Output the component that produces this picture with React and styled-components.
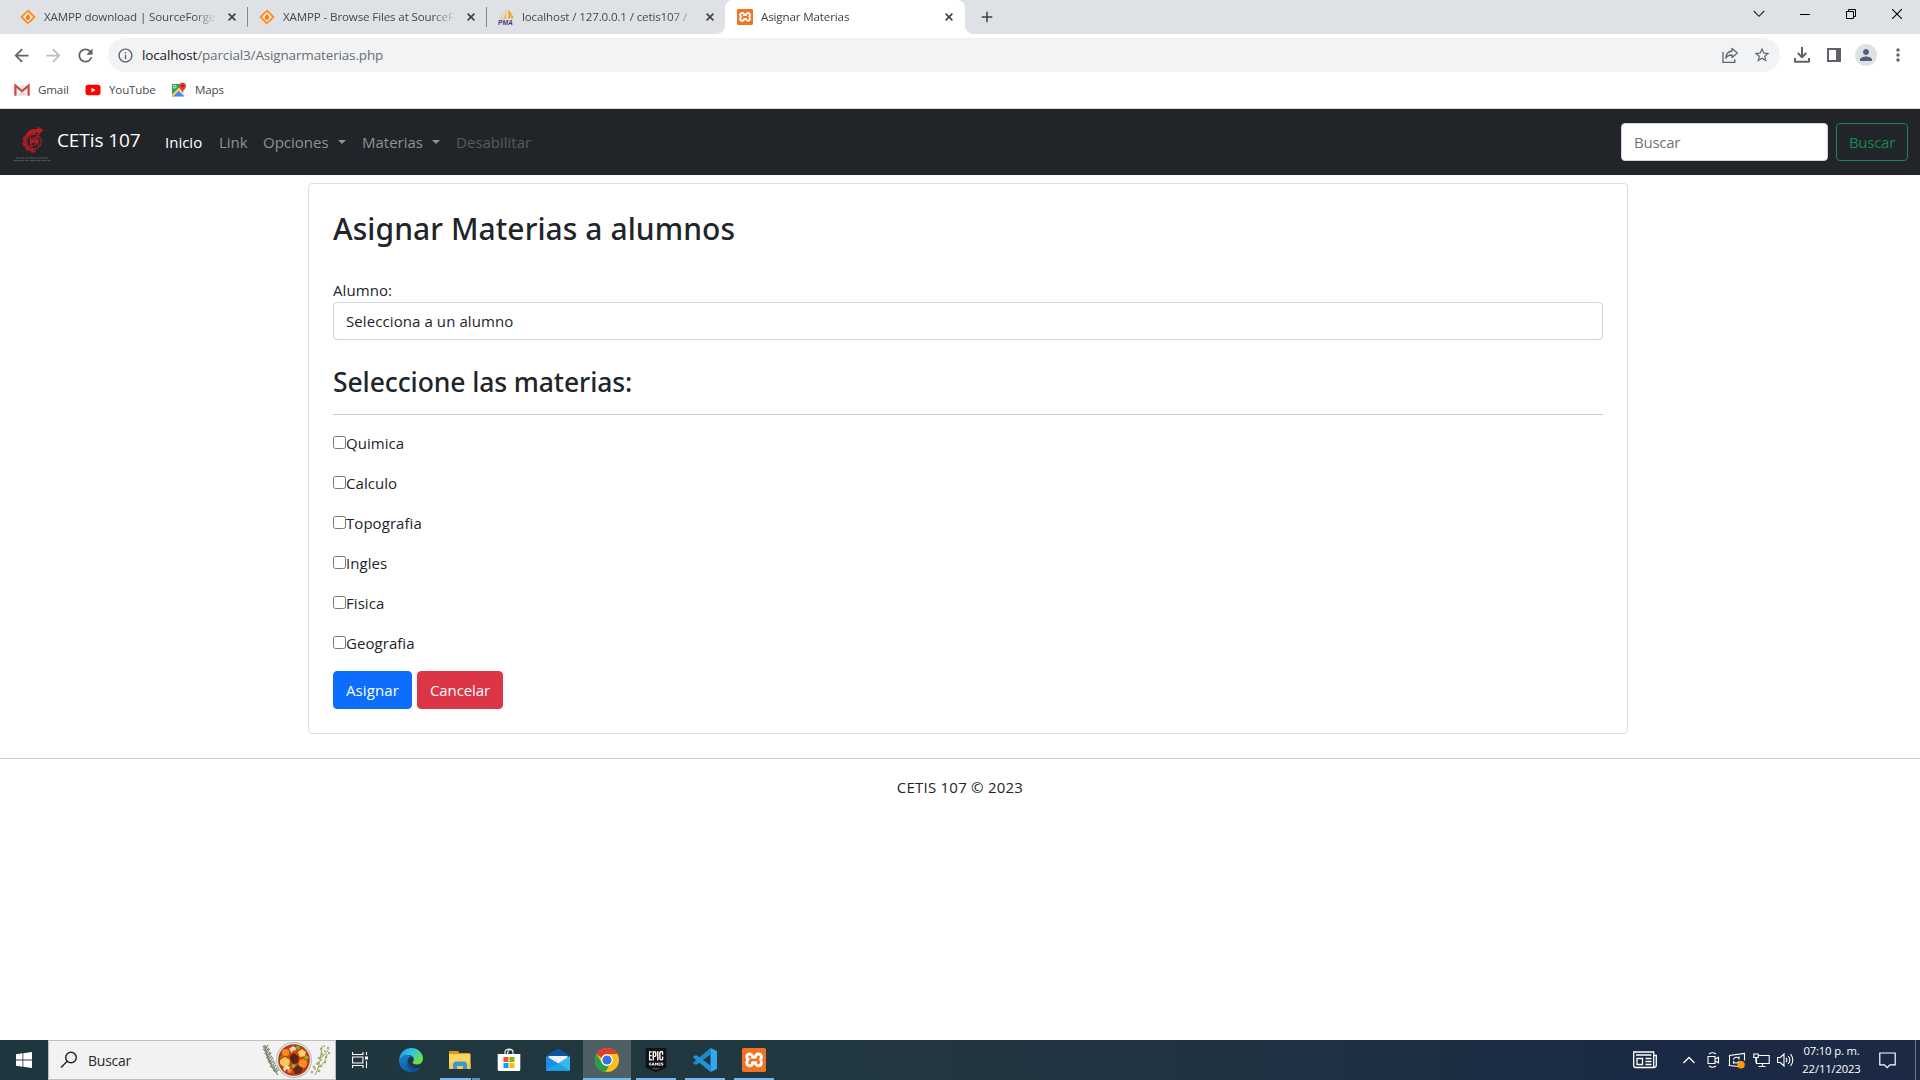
import React from "react";
import styled, { createGlobalStyle, css } from "styled-components";
import {
  MdArrowBack,
  MdArrowForward,
  MdRefresh,
  MdInfoOutline,
  MdStarBorder,
  MdMoreVert,
  MdAdd,
  MdPerson,
} from "react-icons/md";
import { SiXampp, SiEpicgames } from "react-icons/si";

const Global = createGlobalStyle`
  *, *::before, *::after { box-sizing: border-box; }
  html, body { margin: 0; padding: 0; background: #fff; overflow: hidden; }
  body, input, button { font-family: "Open Sans", "Noto Sans", sans-serif; }
  svg { display: block; flex: none; }
`;

const Screen = styled.div`
  display: flex;
  flex-direction: column;
  width: 1920px;
  height: 1080px;
  overflow: hidden;
  background: #fff;
  color: #212529;
  font-size: 15px;
`;

/* ---------- browser ---------- */

const TabStrip = styled.div`
  display: flex;
  height: 34px;
  flex: none;
  padding-left: 8px;
  background: #dee1e6;
`;

const TabBox = styled.div`
  position: relative;
  display: flex;
  align-items: center;
  width: 239px;
  height: 34px;
  padding: 0 10px 0 12px;
  font-size: 11.6px;
  color: #45494d;
  ${(p) =>
    p.$divider &&
    css`
      &::after {
        content: "";
        position: absolute;
        right: -1px;
        top: 7px;
        width: 1px;
        height: 20px;
        background: #85888d;
      }
    `}
  ${(p) =>
    p.$active &&
    css`
      width: 240px;
      background: #fff;
      color: #3c4043;
      border-radius: 8px 8px 0 0;
      &::before,
      &::after {
        content: "";
        position: absolute;
        bottom: 0;
        width: 8px;
        height: 8px;
      }
      &::before {
        left: -8px;
        background: radial-gradient(circle at 0 0, #dee1e6 7.5px, #fff 8px);
      }
      &::after {
        right: -8px;
        background: radial-gradient(circle at 100% 0, #dee1e6 7.5px, #fff 8px);
      }
    `}
`;

const TabTitle = styled.span`
  width: 172px;
  margin: 0 12px 0 8px;
  padding-bottom: 2px;
  overflow: hidden;
  white-space: nowrap;
  letter-spacing: -0.14px;
  -webkit-mask-image: linear-gradient(90deg, #000 150px, transparent 173px);
  mask-image: linear-gradient(90deg, #000 150px, transparent 173px);
`;

const NewTab = styled.div`
  display: flex;
  align-items: center;
  width: 44px;
  padding-left: 13px;
  color: #3c4043;
`;

const WindowControls = styled.div`
  display: flex;
  margin-left: auto;
  height: 28px;
`;

const ControlButton = styled.div`
  display: flex;
  align-items: center;
  justify-content: center;
  width: 46px;
`;

const Toolbar = styled.div`
  display: flex;
  align-items: center;
  height: 42px;
  flex: none;
  padding: 0 4px 0 5px;
  color: #5f6368;
`;

const ToolButton = styled.div`
  display: flex;
  align-items: center;
  justify-content: center;
  width: 32px;
  height: 34px;
  color: ${(p) => (p.$muted ? "#bcbec1" : "#5f6368")};
`;

const Omnibox = styled.div`
  display: flex;
  align-items: center;
  width: 1672px;
  height: 34px;
  margin: 0 6px 0 7px;
  padding: 0 2px 0 9px;
  border-radius: 17px;
  background: #f1f3f4;
`;

const Url = styled.span`
  flex: 1;
  margin-left: 8px;
  font-size: 13.5px;
  letter-spacing: -0.15px;
  color: #6a6e73;
  b { font-weight: 400; color: #202124; }
`;

const Avatar = styled.div`
  display: flex;
  align-items: center;
  justify-content: center;
  width: 22px;
  height: 22px;
  border-radius: 50%;
  background: #dee1e6;
  color: #55607a;
`;

const Bookmarks = styled.div`
  display: flex;
  align-items: center;
  height: 33px;
  flex: none;
  padding: 0 0 4px 14px;
  border-bottom: 1px solid #d5d8dc;
  color: #45494d;
  font-size: 11.6px;
  letter-spacing: -0.15px;
`;

const Bookmark = styled.div`
  display: flex;
  align-items: center;
  gap: 8px;
  width: ${(p) => p.$w}px;
  span { padding-bottom: 2px; }
`;

/* ---------- page ---------- */

const Navbar = styled.nav`
  display: flex;
  align-items: center;
  height: 66px;
  flex: none;
  padding: 0 12px;
  background: #212529;
`;

const Brand = styled.a`
  display: flex;
  align-items: center;
  gap: 5px;
  width: 153px;
  padding-bottom: 4px;
  color: #fff;
  font-size: 19px;
  letter-spacing: -0.1px;
  svg { margin-top: 6px; }
`;

const NavLink = styled.a`
  display: flex;
  align-items: center;
  width: ${(p) => p.$w}px;
  color: ${(p) => p.$color || "#909294"};
`;

const Caret = styled.span`
  margin: 0 0 1px 9px;
  border: 4.2px solid transparent;
  border-top-color: currentColor;
  border-bottom: 0;
`;

const SearchForm = styled.form`
  display: flex;
  gap: 8px;
  margin-left: auto;
`;

const SearchInput = styled.input`
  width: 207px;
  height: 38px;
  padding: 0 12px;
  border: 1px solid #ced4da;
  border-radius: 4px;
  font-size: 15px;
  letter-spacing: -0.25px;
  &::placeholder { color: #6c757d; opacity: 1; }
`;

const Button = styled.button`
  width: ${(p) => p.$w}px;
  height: 38px;
  padding: 0;
  border: 1px solid ${(p) => p.$border || p.$bg};
  border-radius: 4px;
  background: ${(p) => p.$bg || "transparent"};
  color: ${(p) => p.$color || "#fff"};
  font-size: 15px;
  letter-spacing: ${(p) => p.$spacing || 0}px;
`;

const Card = styled.main`
  flex: none;
  width: 1320px;
  height: 551px;
  margin: 8px 0 0 308px;
  padding: 24px;
  border: 1px solid #dfdfdf;
  border-radius: 4px;
`;

const Title = styled.h1`
  margin: 0 0 28px;
  font: 500 30px/42px "Noto Sans", sans-serif;
  letter-spacing: 0.07px;
`;

const Label = styled.label`
  display: block;
  line-height: 24px;
  letter-spacing: 0.07px;
`;

const SelectBox = styled.div`
  height: 38px;
  padding: 0 12px;
  border: 1px solid #ced4da;
  border-radius: 4px;
  line-height: 36px;
  letter-spacing: 0.09px;
`;

const Subtitle = styled.h3`
  margin: 24px 0 14px;
  font: 500 26.5px/36px "Noto Sans", sans-serif;
  letter-spacing: -0.1px;
`;

const Rule = styled.hr`
  flex: none;
  width: 100%;
  height: 1px;
  margin: ${(p) => p.$top || 0}px 0 16px;
  border: 0;
  background: #c7c8c9;
`;

const CheckRow = styled.label`
  display: flex;
  align-items: flex-start;
  height: 24px;
  margin-bottom: 16px;
  line-height: 24px;
  letter-spacing: 0.05px;
  input { width: 13px; height: 13px; margin: 5px 0 0; }
`;

const Actions = styled.div`
  display: flex;
  gap: 5px;
`;

const Footer = styled.footer`
  flex: 1;
  line-height: 24px;
  text-align: center;
  letter-spacing: 0.23px;
`;

/* ---------- taskbar ---------- */

const Taskbar = styled.div`
  display: flex;
  height: 40px;
  flex: none;
  background: linear-gradient(90deg, #20363f 0%, #223840 42%, #1f3242 65%, #1b2a44 85%, #1b2944 100%);
  color: #fff;
`;

const StartButton = styled.div`
  display: flex;
  align-items: center;
  justify-content: center;
  width: 48px;
`;

const TaskSearch = styled.div`
  display: flex;
  align-items: center;
  width: 288px;
  padding: 0 3px 0 11px;
  border: 1px solid #bdbdbd;
  background: #f2f2f2;
  color: #2b2b2b;
  font-size: 14px;
  letter-spacing: -0.25px;
  span { flex: 1; margin-left: 10px; padding-top: 1px; }
`;

const Apps = styled.div`
  display: flex;
  gap: 1px;
  margin-left: 3px;
`;

const AppButton = styled.div`
  display: flex;
  flex-direction: column;
  align-items: center;
  justify-content: space-between;
  width: 48px;
  height: 40px;
  padding-top: 8px;
  background: ${(p) => (p.$active ? "#4e5f66" : "transparent")};
`;

const Indicator = styled.div`
  width: ${(p) => (p.$wide ? 48 : 40)}px;
  height: 2px;
  background: ${(p) =>
    p.$stacked ? "linear-gradient(90deg, #76b9ed 31px, #20363f 31px 32px, #5c8fb4 32px)" : "#76b9ed"};
`;

const XamppTile = styled.div`
  display: flex;
  align-items: center;
  justify-content: center;
  width: ${(p) => p.$s}px;
  height: ${(p) => p.$s}px;
  flex: none;
  border-radius: 2px;
  background: radial-gradient(#fff 60%, #fb7a24 61%);
  color: #f27222;
`;

const EpicTile = styled.div`
  display: flex;
  width: 24px;
  height: 24px;
  color: #111;
  background: linear-gradient(#fff, #fff) center / 15px 18px no-repeat;
`;

const Tray = styled.div`
  display: flex;
  align-items: center;
  margin-left: auto;
`;

const TrayItem = styled.div`
  display: flex;
  justify-content: center;
  width: ${(p) => p.$w || 24}px;
`;

const Clock = styled.div`
  width: 70px;
  padding: 0 1px 1px 0;
  font-size: 11.3px;
  line-height: 17.5px;
  letter-spacing: -0.16px;
  text-align: center;
  white-space: nowrap;
`;

const ShowDesktop = styled.div`
  width: 5px;
  height: 40px;
  margin-left: 8px;
  border-left: 1px solid #69748a;
`;

/* ---------- drawings ---------- */

const CloseIcon = () => (
  <svg width="8" height="8" viewBox="0 0 8 8" stroke="#3c4043" strokeWidth="1.600">
    <path d="m.6.6 6.800 6.800M7.400.6.6 7.400" />
  </svg>
);

const SourceForge = () => (
  <svg width="16" height="16" viewBox="0 0 16 16">
    <path d="M8 .3 15.700 8 8 15.700.3 8z" fill="#ff8a24" />
    <path d="M8 3 13 8 8 13 3 8z" fill="#fff3e4" />
    <path d="M8.100 4.200c.2 1.500 2 2.400 2 4.300 0 1.400-1 2.400-2.200 2.400-1.300 0-2.200-1-2.200-2.200 0-1.800 2-2.600 2.400-4.500z" fill="#ff7a10" />
    <path d="m5.800 2.500 1.800-1.800M10.200 13.500l-1.800 1.800" stroke="#fff" strokeWidth=".8" />
  </svg>
);

const PmaText = styled.text`
  font: italic 700 6.6px "Liberation Sans", sans-serif;
  fill: #3d3a72;
`;

const PhpMyAdmin = () => (
  <svg width="16" height="16" viewBox="0 0 16 16">
    <path d="M4.400 1.500C4.600 5 3.600 8 1 10.200l2.600-.3C5 7.500 5.200 4 4.400 1.500z" fill="#f8c98c" />
    <path d="M7.300.5C8 4 7 7.500 5 9.900l3.200-.3C8.800 6 8.600 3 7.300.5z" fill="#fbb04c" />
    <path d="M9.800.5c1 3 1 6.300 0 9l2 .1c.8-1.600.9-3.600.6-5.500.9 1.800 1 3.700.7 5.500l2.300.2C15 6 12.500 2.600 9.800.5z" fill="#f89c0e" />
    <PmaText x="0" y="15.600">PMA</PmaText>
  </svg>
);

const GmailIcon = () => (
  <svg width="16" height="16" viewBox="0 0 16 16">
    <path d="M1 3h14v10.500H1z" fill="#f0eeee" />
    <path d="M3 13.500 8 9l5 4.500z" fill="#dcdcdc" />
    <path d="M1.400 13.800V3.600L8 9l6.600-5.400v10.200" fill="none" stroke="#d5463a" strokeWidth="2.200" />
  </svg>
);

const YouTubeIcon = () => (
  <svg width="16" height="16" viewBox="0 0 16 16">
    <rect x=".5" y="2.700" width="15" height="10.600" rx="2.800" fill="#f00" />
    <path d="M6.500 5.700v4.800L10.600 8.100z" fill="#fff" />
  </svg>
);

const MapsIcon = () => (
  <svg width="16" height="16" viewBox="0 0 16 16">
    <rect x="1" y="2" width="12.500" height="12.500" rx="1" fill="#e9e9e9" />
    <path d="M1 2h8v5L1 14z" fill="#2aa25a" />
    <path d="m1 14.500 6.300-6.200 6.200 6.200z" fill="#4a86f0" />
    <path d="m1 12.500 9-9 1.500 1.500-9.500 9.500z" fill="#ffd04a" />
    <path d="M11.500.6c2 0 3.500 1.500 3.500 3.400 0 2.400-2.700 3.700-3.500 7-.8-3.300-3.500-4.600-3.500-7C8 2.100 9.500.6 11.500.6z" fill="#e23f33" />
    <circle cx="11.500" cy="4" r="1.200" fill="#8c1d17" />
    <circle cx="3.700" cy="4.700" r="1.400" fill="none" stroke="#fff" strokeWidth=".8" />
  </svg>
);

const ShareIcon = () => (
  <svg width="18" height="18" viewBox="0 0 18 18" fill="none" stroke="#5f6368" strokeWidth="1.300">
    <path d="M2 6v10.300h11.800v-3" />
    <path d="M11 2.400 16.400 7 11 11.500V9c-3 0-5 .9-6.200 3.200C5 8.300 7.300 5.500 11 5z" strokeLinejoin="round" />
  </svg>
);

const DownloadIcon = () => (
  <svg width="18" height="18" viewBox="0 0 18 18" fill="none" stroke="#5f6368" strokeWidth="2">
    <path d="M9 1v10M4.800 7 9 11.200 13.200 7M2 12v3.800h14V12" strokeLinejoin="round" />
  </svg>
);

const PanelIcon = () => (
  <svg width="14" height="14" viewBox="0 0 14 14">
    <path d="M1 1h12v12H1z" fill="none" stroke="#5f6368" strokeWidth="2" />
    <path d="M9 0h5v14H9z" fill="#5f6368" />
  </svg>
);

const teeth = [95, 130, 165, 200, 235, 268];

const SchoolLogo = () => (
  <svg width="40" height="40" viewBox="0 0 40 40">
    {teeth.map((a) => (
      <path key={a} d="M29 16.600h3.600v3.800H29z" fill="#a81c1f" transform={`rotate(${a} 21.500 18.500)`} />
    ))}
    <path d="M21.500 9.500a9 9 0 1 0 2 17.800" fill="none" stroke="#a81c1f" strokeWidth="2.600" />
    <path d="M14.500 12.500c.5-3.500 2.500-5.700 5.500-6.200L25.500 6V3.200L31.500 7 26 12.200V9.500c-4 0-7 1-9.500 4.500z" fill="#b51d20" />
    <circle cx="22" cy="18.500" r="7.300" fill="#212529" stroke="#a81c1f" strokeWidth="1.200" />
    <path d="M18.700 14v3.200h2.600V14M23.200 14v3.200H26V14h-2.800M21.300 19.600h-2.600V23h2.600M23.200 23v-3.400H26V23M17.500 18.400h9" fill="none" stroke="#b51d20" strokeWidth="1.300" />
    <path d="M4 35h32" stroke="#595d60" strokeWidth="1.200" strokeDasharray="3 .6 5 .8" />
    <path d="M1.500 37.600h37" stroke="#4f5356" strokeWidth="1" strokeDasharray="4 .6 6 .8" />
  </svg>
);

const WindowsLogo = () => (
  <svg width="16" height="16" viewBox="0 0 16 16" fill="#fff">
    <path d="M0 2.200 6.500 1.300v6.300H0zM7.300 1.200 16 0v7.600H7.300zM0 8.400h6.500v6.300L0 13.800zM7.300 8.400H16V16l-8.700-1.200z" />
  </svg>
);

const SearchIcon = () => (
  <svg width="18" height="18" viewBox="0 0 18 18" fill="none" stroke="#222" strokeWidth="1.400">
    <circle cx="11" cy="6.500" r="5.300" />
    <path d="M7.200 10.300 1 16.500" />
  </svg>
);

const rosemary = [[3, 7], [4.5, 11], [6, 15], [8, 19.5], [10, 24], [13, 28]];
const thyme = [[66, 7], [67, 12], [64, 16], [63, 21], [59, 25], [57, 30]];

const StewDrawing = () => (
  <svg width="70" height="38" viewBox="0 0 70 38">
    <path d="M3 4C4 16 9 26 16 34" fill="none" stroke="#75705c" strokeWidth="1.100" />
    {rosemary.map(([x, y]) => (
      <path key={y} d={`M${x - 2} ${y - 2}l2.500 3 2.500-4M${x - 2} ${y + 1}l3 2 3-3`} fill="none" stroke="#7d8a72" strokeWidth="1.200" />
    ))}
    <circle cx="32" cy="19" r="18" fill="#b9bec4" />
    <circle cx="32" cy="19" r="17" fill="#e5e8eb" />
    <circle cx="32" cy="19" r="15.800" fill="#b8380f" />
    <circle cx="32" cy="19" r="13.500" fill="#cf4a12" />
    <circle cx="23.500" cy="11.500" r="3.600" fill="#f98b1e" />
    <circle cx="41" cy="22.500" r="4.200" fill="#fb8c22" />
    <circle cx="27.500" cy="30" r="2" fill="#f3831c" />
    <path d="m18 19 5-3 5 3-1 5-5 2-4-3z" fill="#fcc95c" />
    <path d="m36 11 4-3 4 3-1 4-5 1z" fill="#fcd06a" />
    <path d="m28 15 4-3 5 4-1 6-5 1-3-4z" fill="#5a2416" />
    <path d="m31 28 4-4 6 3-2 5-6 1z" fill="#64281a" />
    <path d="m27 8 4-3 3 2-1 3-2-1-1 3zM21 28l3-4 4 2-1 3-3-1-1 3z" fill="#efdccb" />
    <circle cx="36" cy="6.500" r="2" fill="#6fb52c" />
    <circle cx="44.500" cy="16.500" r="2" fill="#7cbb30" />
    <circle cx="31.500" cy="25" r="1.900" fill="#79b82f" />
    <circle cx="19.500" cy="16" r="1.300" fill="#5c9a22" />
    <path d="M53 34C57 27 59 17 60 5M56 26c5-2 8-6 9-13M58 17c4-2 6-5 8-8" fill="none" stroke="#8b9460" strokeWidth=".9" />
    {thyme.map(([x, y]) => (
      <g key={y} fill="#a3b364">
        <circle cx={x} cy={y} r="1.300" />
        <circle cx={x - 7} cy={y + 1} r="1.300" />
        <circle cx={x - 4} cy={y - 2} r="1" />
      </g>
    ))}
  </svg>
);

const TaskView = () => (
  <svg width="16" height="16" viewBox="0 0 16 16" fill="none" stroke="#fff" strokeWidth="1.100">
    <path d="M.5 0v2.500h10.500V0M.5 16v-2.500h10.500V16M.6 5h10.300v6H.6zM14.500 0v3M14.500 9v7" />
    <path d="M13 4.500h3v3h-3z" fill="#fff" stroke="none" />
  </svg>
);

const EdgeIcon = () => (
  <svg width="24" height="24" viewBox="0 0 24 24">
    <defs>
      <linearGradient id="edgeTop" x1="0" y1="0" x2="1" y2=".5">
        <stop offset="0" stopColor="#1b8fdd" />
        <stop offset=".5" stopColor="#2fc2e4" />
        <stop offset="1" stopColor="#6fe04a" />
      </linearGradient>
      <linearGradient id="edgeLow" x1="0" y1="0" x2="1" y2="1">
        <stop offset="0" stopColor="#1683d8" />
        <stop offset="1" stopColor="#114a8b" />
      </linearGradient>
    </defs>
    <path d="M.3 11C1 4.500 6 0 12.200 0 19 0 24 5 24 10.500c0 3.800-2.700 6-6 6-2.600 0-4.300-1-4.300-2 0-.8 1.100-1.300 1.100-3C14.800 9 12.500 7 9.200 7 5 7 1.500 9 .3 13z" fill="url(#edgeTop)" />
    <path d="M.2 12.500C1 9 5 7 9 7c2 0 3.400.7 4.300 1.800C10 8.500 8.800 11 8.800 13.300c0 3.800 3.500 7 8.200 7 2 0 3.600-.6 5.300-1.600C20.200 22 16.500 24 12.300 24 5.500 24-.2 19 .2 12.500z" fill="url(#edgeLow)" />
    <path d="M9.200 12c-.7 1-.5 2-.4 3 .7 3.200 4 5.300 8.200 5.300 2 0 3.600-.6 5.300-1.600-2 3.200-5 4.800-8.300 5C9 22.500 6.500 16 9.200 12z" fill="#0d4f96" />
  </svg>
);

const ExplorerIcon = () => (
  <svg width="24" height="24" viewBox="0 0 24 24">
    <path d="M1 3h9l1.500 2H22v4H1z" fill="#dc9a10" />
    <path d="M1 6h21.500v15H1z" fill="#fcd462" />
    <path d="M1 15h21.500v6H1z" fill="#f8c84e" />
    <path d="M5 21v-5.500L7 13.500h10l2 2V21h-4v-3H9v3z" fill="#3d94d6" />
  </svg>
);

const StoreIcon = () => (
  <svg width="24" height="24" viewBox="0 0 24 24">
    <path d="M8 6.500V4c0-4 8-4 8 0v2.500M10.800 6V3.500c.5-2.500 5-2.500 5 0" fill="none" stroke="#f4f4f4" strokeWidth="1.200" />
    <path d="M.7 6h22.600v15.500q0 1.500-1.500 1.500H2.200q-1.500 0-1.500-1.500z" fill="#fff" />
    <path d="M6.500 9h5v5h-5z" fill="#f25022" />
    <path d="M12.500 9h5v5h-5z" fill="#7fba00" />
    <path d="M6.500 15h5v5h-5z" fill="#00a4ef" />
    <path d="M12.500 15h5v5h-5z" fill="#ffb900" />
  </svg>
);

const MailIcon = () => (
  <svg width="24" height="24" viewBox="0 0 24 24">
    <path d="M0 8 12 .5 24 8v3H0z" fill="#0b57a4" />
    <path d="M2.500 8h19v8h-19z" fill="#f2f2f2" />
    <path d="M0 8v14.500h24z" fill="#1a8fe3" />
    <path d="M24 8v14.500H0z" fill="#35b8f1" />
    <path d="M0 22.500 12 15l12 7.500z" fill="#1fa2ea" />
  </svg>
);

const ChromeIcon = () => (
  <svg width="24" height="24" viewBox="0 0 24 24">
    <circle cx="12" cy="12" r="12" fill="#fbc116" />
    <path d="M1.600 6A12 12 0 0 1 22.400 6H12a6 6 0 0 0-5.600 4z" fill="#e33b2e" />
    <path d="M1.600 6 6.800 15A6 6 0 0 0 14 17.700L10.500 24A12 12 0 0 1 1.600 6z" fill="#269f4b" />
    <circle cx="12" cy="12" r="5.800" fill="#fff" />
    <circle cx="12" cy="12" r="4.600" fill="#2f76ea" />
  </svg>
);

const CodeIcon = () => (
  <svg width="24" height="24" viewBox="0 0 24 24">
    <path d="M17.500 0v6.500L3.200 17 .5 15.600q-.6-.6 0-1.300z" fill="#1f86ca" />
    <path d="M17.500 24v-6.500L3.200 7 .5 8.400q-.6.6 0 1.300z" fill="#2193dc" />
    <path d="M17.500 0 24 3v18l-6.500 3z" fill="#2fa8f2" />
  </svg>
);

const NewsIcon = () => (
  <svg width="24" height="18" viewBox="0 0 24 18" fill="none" stroke="#fff" strokeWidth="1.300">
    <path d="M.7 1h20v15.500H2.500Q.7 16.500.7 14.500zM21 4.500h2.300V14q0 2.500-2.500 2.500M3 4h15.500M12.500 7.500h6M12.500 10.500h6M12.500 13.500h6M4 7.500h5.500v6H4z" />
  </svg>
);

const ChevronUp = () => (
  <svg width="12" height="8" viewBox="0 0 12 8" fill="none" stroke="#fff" strokeWidth="1.300">
    <path d="M.5 7 6 1.500 11.500 7" />
  </svg>
);

const MeetIcon = () => (
  <svg width="14" height="16" viewBox="0 0 14 16" fill="none" stroke="#fff" strokeWidth="1.100">
    <path d="M2 4.500h7v7H2zM9 7l3.500-1.700v5.500L9 9M3 2Q6.500-.5 10 2M3 14q3.500 2.500 7 0" />
  </svg>
);

const UpdateIcon = () => (
  <svg width="18" height="17" viewBox="0 0 18 17" fill="none" stroke="#fff" strokeWidth="1.100">
    <path d="M10.500 14.500 1.500 13.500v-10L16.500 1.500v7M1.500 13.500H.5" />
    <path d="M5.500 7.500c.7-2.500 4-3 5.500-1V4.500M11 9c-1 2.500-4 2.500-5.500.8v2" />
    <circle cx="13" cy="12.800" r="3.800" fill="#ff9a0a" stroke="none" />
  </svg>
);

const NetworkIcon = () => (
  <svg width="17" height="16" viewBox="0 0 17 16" fill="none" stroke="#fff" strokeWidth="1.100">
    <path d="M5.500 3.500h10.700v8H3.500V6M9.500 11.500v3M5.500 14.500h7M.8 2h4.400v3.500H.8zM2.900 5.500v5" />
  </svg>
);

const SpeakerIcon = () => (
  <svg width="17" height="16" viewBox="0 0 17 16" fill="none" stroke="#fff" strokeWidth="1.100">
    <path d="M.6 5.500h2.700L7 2v12l-3.700-3.500H.6zM9 5.800q1.700 2.200 0 4.400M11.300 4q3 4 0 8M13.600 2q4.400 6 0 12" />
  </svg>
);

const NoticeIcon = () => (
  <svg width="17" height="17" viewBox="0 0 17 17" fill="none" stroke="#fff" strokeWidth="1.200">
    <path d="M.8 1h15.400v11.800h-5.200l-2.800 2.800-2.800-2.800H.8z" />
  </svg>
);

const XamppIcon = ({ size }) => (
  <XamppTile $s={size}>
    <SiXampp size={size} />
  </XamppTile>
);

/* ---------- composition ---------- */

const tabs = [
  { title: "XAMPP download | SourceForge", icon: <SourceForge />, divider: true },
  { title: "XAMPP - Browse Files at SourceForge", icon: <SourceForge />, divider: true },
  { title: "localhost / 127.0.0.1 / cetis107 /", icon: <PhpMyAdmin /> },
  { title: "Asignar Materias", icon: <XamppIcon size={16} />, active: true },
];

const subjects = ["Quimica", "Calculo", "Topografia", "Ingles", "Fisica", "Geografia"];

const apps = [
  { icon: <EdgeIcon /> },
  { icon: <ExplorerIcon />, open: true, stacked: true },
  { icon: <StoreIcon /> },
  { icon: <MailIcon /> },
  { icon: <ChromeIcon />, open: true, active: true },
  { icon: <EpicTile><SiEpicgames size={24} /></EpicTile>, open: true },
  { icon: <CodeIcon />, open: true },
  { icon: <XamppIcon size={24} />, open: true },
];

function Browser() {
  return (
    <>
      <TabStrip>
        {tabs.map((t) => (
          <TabBox key={t.title} $active={t.active} $divider={t.divider}>
            {t.icon}
            <TabTitle>{t.title}</TabTitle>
            <CloseIcon />
          </TabBox>
        ))}
        <NewTab>
          <MdAdd size={18} />
        </NewTab>
        <WindowControls>
          <ControlButton>
            <svg width="12" height="8" viewBox="0 0 12 8" fill="none" stroke="#222" strokeWidth="1.100">
              <path d="M.8 1 6 6.300 11.200 1" />
            </svg>
          </ControlButton>
          <ControlButton>
            <svg width="10" height="1">
              <path d="M0 .5h10" stroke="#000" />
            </svg>
          </ControlButton>
          <ControlButton>
            <svg width="10" height="10" viewBox="0 0 10 10" fill="none" stroke="#000">
              <path d="M.5 2.500h7v7h-7zM2.500 2.500v-2h7v7h-2" />
            </svg>
          </ControlButton>
          <ControlButton>
            <svg width="10" height="10" viewBox="0 0 10 10" stroke="#000" strokeWidth="1.100">
              <path d="m0 0 10 10M10 0 0 10" />
            </svg>
          </ControlButton>
        </WindowControls>
      </TabStrip>
      <Toolbar>
        <ToolButton><MdArrowBack size={21} /></ToolButton>
        <ToolButton $muted><MdArrowForward size={21} /></ToolButton>
        <ToolButton><MdRefresh size={21} /></ToolButton>
        <Omnibox>
          <MdInfoOutline size={17} />
          <Url><b>localhost</b>/parcial3/Asignarmaterias.php</Url>
          <ToolButton><ShareIcon /></ToolButton>
          <ToolButton><MdStarBorder size={18} /></ToolButton>
        </Omnibox>
        <ToolButton><DownloadIcon /></ToolButton>
        <ToolButton><PanelIcon /></ToolButton>
        <ToolButton><Avatar><MdPerson size={18} /></Avatar></ToolButton>
        <ToolButton><MdMoreVert size={20} /></ToolButton>
      </Toolbar>
      <Bookmarks>
        <Bookmark $w={71}><GmailIcon /><span>Gmail</span></Bookmark>
        <Bookmark $w={86}><YouTubeIcon /><span>YouTube</span></Bookmark>
        <Bookmark $w={70}><MapsIcon /><span>Maps</span></Bookmark>
      </Bookmarks>
    </>
  );
}

function Page() {
  return (
    <>
      <Navbar>
        <Brand><SchoolLogo />CETis 107</Brand>
        <NavLink $w={54} $color="#fff">Inicio</NavLink>
        <NavLink $w={44}>Link</NavLink>
        <NavLink $w={99}>Opciones<Caret /></NavLink>
        <NavLink $w={94}>Materias<Caret /></NavLink>
        <NavLink $w={80} $color="#585b5e">Desabilitar</NavLink>
        <SearchForm>
          <SearchInput placeholder="Buscar" />
          <Button type="button" $w={72} $border="#198754" $color="#198754" $spacing={-0.25}>Buscar</Button>
        </SearchForm>
      </Navbar>
      <Card>
        <Title>Asignar Materias a alumnos</Title>
        <Label>Alumno:</Label>
        <SelectBox>Selecciona a un alumno</SelectBox>
        <Subtitle>Seleccione las materias:</Subtitle>
        <Rule />
        {subjects.map((s) => (
          <CheckRow key={s}><input type="checkbox" />{s}</CheckRow>
        ))}
        <Actions>
          <Button $w={79} $bg="#0d6efd" $spacing={0.1}>Asignar</Button>
          <Button $w={86} $bg="#dc3545" $spacing={-0.1}>Cancelar</Button>
        </Actions>
      </Card>
      <Rule $top={24} />
      <Footer>CETIS 107 © 2023</Footer>
    </>
  );
}

function SystemBar() {
  return (
    <Taskbar>
      <StartButton><WindowsLogo /></StartButton>
      <TaskSearch><SearchIcon /><span>Buscar</span><StewDrawing /></TaskSearch>
      <StartButton><TaskView /></StartButton>
      <Apps>
        {apps.map((a, i) => (
          <AppButton key={i} $active={a.active}>
            {a.icon}
            {a.open && <Indicator $wide={a.active} $stacked={a.stacked} />}
          </AppButton>
        ))}
      </Apps>
      <Tray>
        <TrayItem $w={64}><NewsIcon /></TrayItem>
        <TrayItem $w={24}><ChevronUp /></TrayItem>
        <TrayItem><MeetIcon /></TrayItem>
        <TrayItem><UpdateIcon /></TrayItem>
        <TrayItem><NetworkIcon /></TrayItem>
        <TrayItem><SpeakerIcon /></TrayItem>
        <Clock>07:10 p. m.<br />22/11/2023</Clock>
        <TrayItem $w={40}><NoticeIcon /></TrayItem>
        <ShowDesktop />
      </Tray>
    </Taskbar>
  );
}

export default function App() {
  return (
    <Screen>
      <Global />
      <Browser />
      <Page />
      <SystemBar />
    </Screen>
  );
}
